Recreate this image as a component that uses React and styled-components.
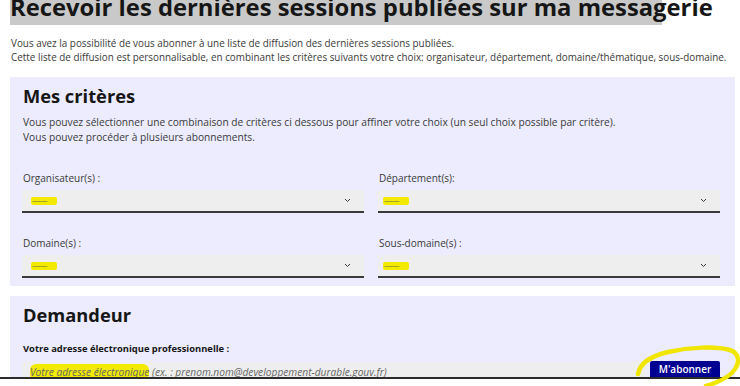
import React from 'react';
import styled, { createGlobalStyle } from 'styled-components';

const GlobalStyle = createGlobalStyle`
  body {
    margin: 0;
    background: #fff;
    font-family: "Open Sans", "Liberation Sans", sans-serif;
    color: #3a3a3a;
  }
`;

const Page = styled.div`
  position: relative;
  height: 386px;
  overflow: hidden;
  padding: 0 5px 0 10px;
`;

const Titre = styled.h1`
  margin: 0;
  height: 25px;
  line-height: 14px;
  font-size: 23.8px;
  font-weight: 700;
  color: #161616;
  white-space: nowrap;
  background: linear-gradient(to right, #c9c9c9 652px, transparent 652px);
`;

const Intro = styled.p`
  margin: 11px 0 0 1px;
  font-size: 9.9px;
  line-height: 14px;
  white-space: nowrap;
`;

const Panneau = styled.section`
  background: #ececfe;
  margin-top: ${({ $haut }) => $haut}px;
  padding: 7px 15px 8px 12px;
  width: 725px;
  box-sizing: border-box;
  ${({ $coupe }) => ($coupe ? `height: ${$coupe}px; overflow: hidden;` : '')}
`;

const SousTitre = styled.h2`
  margin: 0 0 0 1px;
  font-size: 18.3px;
  line-height: 24px;
  font-weight: 700;
  color: #161616;
`;

const Texte = styled.p`
  margin: 7px 0 0 1px;
  font-size: 10.2px;
  line-height: 15px;
  white-space: nowrap;
`;

const Grille = styled.div`
  display: grid;
  grid-template-columns: 1fr 1fr;
  column-gap: 14px;
  row-gap: 23px;
  margin-top: 26px;
`;

const Champ = styled.div`
  display: flex;
  flex-direction: column;
  gap: 5px;
`;

const Label = styled.label`
  display: block;
  font-size: ${({ $gras }) => ($gras ? 9.4 : 10)}px;
  line-height: 14px;
  font-weight: ${({ $gras }) => ($gras ? 700 : 400)};
  color: ${({ $gras }) => ($gras ? '#161616' : '#3a3a3a')};
  padding-left: 1px;
  margin-top: ${({ $haut }) => $haut || 0}px;
`;

const Select = styled.div`
  display: flex;
  align-items: center;
  justify-content: space-between;
  height: 21px;
  background: #eeeeee;
  border-bottom: 2px solid #3a3a3a;
  padding: 0 13px 0 ${({ $decal }) => $decal}px;
`;

const Surligne = styled.span`
  display: inline-block;
  width: 26px;
  height: 8px;
  overflow: hidden;
  background: #f2ea00;
  border-radius: 2px;
  font-size: 7px;
  line-height: 8px;
  letter-spacing: -0.6px;
  color: #6a6a40;
  padding: 0 1px;
  box-sizing: border-box;
`;

const Fleche = () => (
  <svg width="7" height="5" viewBox="0 0 7 5">
    <path d="M1 1 L3.5 3.5 L6 1" fill="none" stroke="#3a3a3a" strokeWidth="1" />
  </svg>
);

const LigneSaisie = styled.div`
  display: flex;
  gap: 5px;
  margin-top: 5px;
  align-items: flex-start;
`;

const Saisie = styled.div`
  flex: 1;
  height: 22px;
  margin-top: 1px;
  background: #eeeeee;
  padding: 3px 8px 0;
  box-sizing: border-box;
  font-size: 10.2px;
  line-height: 14px;
  font-style: italic;
  color: #666;
  text-decoration: underline;
  white-space: nowrap;
`;

const Marque = styled.span`
  background: #f2ea00;
  border-radius: 6px;
  padding: 1px 0;
`;

const Bouton = styled.button`
  width: 70px;
  height: 24px;
  border: none;
  border-radius: 2px 2px 0 0;
  background: #000091;
  color: #fff;
  font-family: "Open Sans", "Liberation Sans", sans-serif;
  font-size: 10px;
  font-weight: 600;
  line-height: 16px;
  padding: 0;
  display: flex;
  justify-content: center;
  white-space: nowrap;
`;

const Trait = styled.div`
  margin: 0 -5px 0 -10px;
  border-top: 2px solid #2b2b2b;
`;

const Annotation = styled.svg`
  position: absolute;
  left: 0;
  top: 0;
  pointer-events: none;
`;

const criteres = [
  { label: 'Organisateur(s) :', decal: 9 },
  { label: 'Département(s):', decal: 5 },
  { label: 'Domaine(s) :', decal: 9 },
  { label: 'Sous-domaine(s) :', decal: 5 },
];

const App = () => (
  <Page>
    <GlobalStyle />
    <Titre>Recevoir les dernières sessions publiées sur ma messagerie</Titre>
    <Intro>
      Vous avez la possibilité de vous abonner à une liste de diffusion des dernières sessions publiées.
      <br />
      Cette liste de diffusion est personnalisable, en combinant les critères suivants votre choix: organisateur, département, domaine/thématique, sous-domaine.
    </Intro>

    <Panneau $haut={13}>
      <SousTitre>Mes critères</SousTitre>
      <Texte>
        Vous pouvez sélectionner une combinaison de critères ci dessous pour affiner votre choix (un seul choix possible par critère).
        <br />
        Vous pouvez procéder à plusieurs abonnements.
      </Texte>
      <Grille>
        {criteres.map((c) => (
          <Champ key={c.label}>
            <Label>{c.label}</Label>
            <Select $decal={c.decal}>
              <Surligne>---------</Surligne>
              <Fleche />
            </Select>
          </Champ>
        ))}
      </Grille>
    </Panneau>

    <Panneau $haut={10} $coupe={81}>
      <SousTitre>Demandeur</SousTitre>
      <Label $gras $haut={15}>Votre adresse électronique professionnelle :</Label>
      <LigneSaisie>
        <Saisie>
          <Marque>Votre adresse électronique</Marque> (ex. : prenom.nom@developpement-durable.gouv.fr)
        </Saisie>
        <Bouton>M'abonner</Bouton>
      </LigneSaisie>
    </Panneau>
    <Trait />

    <Annotation width="740" height="386" viewBox="0 0 740 386">
      <path
        d="M638 374 C640 364 648 357 668 352 C690 347 715 346 730 350 C739 353 740 362 735 369 C731 376 722 381 706 386"
        fill="none"
        stroke="#f0e600"
        strokeWidth="4.5"
        strokeLinecap="round"
      />
    </Annotation>
  </Page>
);

export default App;
